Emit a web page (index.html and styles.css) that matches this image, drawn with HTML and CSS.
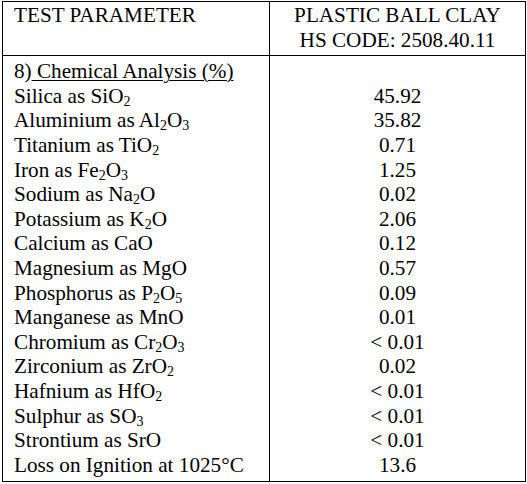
FILE: index.html
```html
<!DOCTYPE html>
<html>
<head>
<meta charset="utf-8">
<link rel="stylesheet" href="styles.css">
</head>
<body>
<table class="spec">
  <colgroup><col class="c1"><col class="c2"></colgroup>
  <thead>
    <tr>
      <th class="param">TEST PARAMETER</th>
      <th class="value">PLASTIC BALL CLAY<br>HS CODE: 2508.40.11</th>
    </tr>
  </thead>
  <tbody>
    <tr class="first"><td class="param">8)<u> Chemical Analysis (%)</u></td><td class="value"></td></tr>
    <tr><td class="param">Silica as SiO<sub>2</sub></td><td class="value">45.92</td></tr>
    <tr><td class="param">Aluminium as Al<sub>2</sub>O<sub>3</sub></td><td class="value">35.82</td></tr>
    <tr><td class="param">Titanium as TiO<sub>2</sub></td><td class="value">0.71</td></tr>
    <tr><td class="param">Iron as Fe<sub>2</sub>O<sub>3</sub></td><td class="value">1.25</td></tr>
    <tr><td class="param">Sodium as Na<sub>2</sub>O</td><td class="value">0.02</td></tr>
    <tr><td class="param">Potassium as K<sub>2</sub>O</td><td class="value">2.06</td></tr>
    <tr><td class="param">Calcium as CaO</td><td class="value">0.12</td></tr>
    <tr><td class="param">Magnesium as MgO</td><td class="value">0.57</td></tr>
    <tr><td class="param">Phosphorus as P<sub>2</sub>O<sub>5</sub></td><td class="value">0.09</td></tr>
    <tr><td class="param">Manganese as MnO</td><td class="value">0.01</td></tr>
    <tr><td class="param">Chromium as Cr<sub>2</sub>O<sub>3</sub></td><td class="value">&lt; 0.01</td></tr>
    <tr><td class="param">Zirconium as ZrO<sub>2</sub></td><td class="value">0.02</td></tr>
    <tr><td class="param">Hafnium as HfO<sub>2</sub></td><td class="value">&lt; 0.01</td></tr>
    <tr><td class="param">Sulphur as SO<sub>3</sub></td><td class="value">&lt; 0.01</td></tr>
    <tr><td class="param">Strontium as SrO</td><td class="value">&lt; 0.01</td></tr>
    <tr class="last"><td class="param">Loss on Ignition at 1025°C</td><td class="value">13.6</td></tr>
  </tbody>
</table>
</body>
</html>
```
FILE: styles.css
```css
html, body {
  margin: 0;
  padding: 0;
  background: #fff;
}
body {
  font-family: "Liberation Serif", Tinos, "Times New Roman", Times, serif;
  font-size: 21.2px;
  line-height: 24.6px;
  color: #000;
}
.spec {
  margin: 1px 0 0 2px;
  width: 523px;
  table-layout: fixed;
  border-collapse: collapse;
  border: 1px solid #000;
  font: inherit;
}
.c1 { width: 267px; }
.c2 { width: 256px; }
.spec th, .spec td {
  padding: 0;
  font-weight: normal;
  vertical-align: top;
  white-space: nowrap;
}
.spec th {
  padding-top: 1px;
  padding-bottom: 3px;
  border-bottom: 1px solid #000;
}
.param {
  text-align: left;
  padding-left: 11px !important;
  border-right: 1px solid #000;
}
.value {
  text-align: center;
}
.first td { padding-top: 3px; }
.last td { padding-bottom: 4px; }
u {
  text-decoration-thickness: 1px;
  text-underline-offset: 2px;
}
sub {
  font-size: 0.66em;
  line-height: 0;
  vertical-align: -0.18em;
}
```
